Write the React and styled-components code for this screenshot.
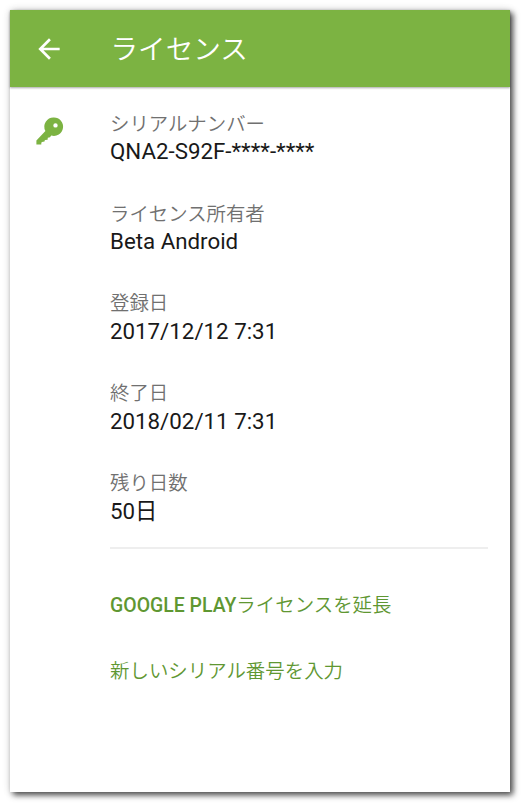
import React from 'react';
import styled, { createGlobalStyle } from 'styled-components';

const GlobalStyle = createGlobalStyle`
  * { box-sizing: border-box; }
  body { margin: 0; background: #fff; }
`;

const Page = styled.div`
  width: 521px;
  height: 803px;
  padding: 10px 11px 11px 10px;
  font-family: Roboto, "Noto Sans CJK JP", sans-serif;
  overflow: hidden;
`;

const Screen = styled.main`
  height: 782px;
  background: #fff;
  box-shadow: 3px 3px 6px rgba(0, 0, 0, 0.7), 0 0 8px rgba(0, 0, 0, 0.14);
`;

const Toolbar = styled.header`
  display: flex;
  align-items: center;
  height: 77px;
  padding-left: 23px;
  gap: 45.5px;
  background: #7cb342;
  box-shadow: 0 1px 2px rgba(0, 0, 0, 0.35);
`;

const BackButton = styled.button`
  display: flex;
  padding: 0;
  border: 0;
  background: none;
  color: #fff;
`;

const Title = styled.h1`
  margin: 2px 0 0;
  font-size: 27.6px;
  line-height: 40px;
  font-weight: 350;
  color: #fff;
`;

const Content = styled.section`
  display: grid;
  grid-template-columns: 100px 378px;
  padding-top: 23.8px;
`;

const IconCell = styled.div`
  padding: 4.2px 0 0 24px;
`;

const Details = styled.dl`
  margin: 0;
  height: 438.2px;
  border-bottom: 2px solid #eeeeee;
`;

const Field = styled.div`
  height: 89.8px;
`;

const Label = styled.dt`
  font-size: 19.4px;
  line-height: 28px;
  font-weight: 350;
  color: #707070;
`;

const Value = styled.dd`
  margin: -0.45px 0 0;
  font-size: 22.3px;
  line-height: 27px;
  color: #191919;
`;

const Actions = styled.nav`
  display: flex;
  flex-direction: column;
  align-items: flex-start;
  grid-column: 2;
  padding-top: 43px;
  gap: 38px;
`;

const Action = styled.button`
  padding: 0;
  border: 0;
  background: none;
  font: 500 19.46px/28px Roboto, "Noto Sans CJK JP", sans-serif;
  color: #5f9732;
  white-space: nowrap;
`;

const Japanese = styled.span`
  font-weight: 350;
`;

const fields = [
  ['シリアルナンバー', 'QNA2-S92F-****-****'],
  ['ライセンス所有者', 'Beta Android'],
  ['登録日', '2017/12/12 7:31'],
  ['終了日', '2018/02/11 7:31'],
  ['残り日数', '50日'],
];

export default function App() {
  return (
    <Page>
      <GlobalStyle />
      <Screen>
        <Toolbar>
          <BackButton aria-label="戻る">
            <svg width="32" height="32" viewBox="0 0 24 24" fill="currentColor">
              <path d="M20 11H7.83l5.59-5.59L12 4l-8 8 8 8 1.41-1.41L7.83 13H20z" />
            </svg>
          </BackButton>
          <Title>ライセンス</Title>
        </Toolbar>
        <Content>
          <IconCell>
            <svg width="32" height="32" viewBox="0 0 32 32" fill="#7cb342" fillRule="evenodd">
              <path d="M20 2.5a9.2 9.2 0 1 1-2.8 18l-1.2 1.8-2.2.4-.2 2-2.7.2-.4 1.6-2.5.4-.7.8v1.7H2.4v-4l9-9.4A9.2 9.2 0 0 1 20 2.5zM21.5 8.2a2.2 2.2 0 1 0 0 4.4 2.2 2.2 0 0 0 0-4.4z" />
            </svg>
          </IconCell>
          <Details>
            {fields.map(([label, value]) => (
              <Field key={label}>
                <Label>{label}</Label>
                <Value>{value}</Value>
              </Field>
            ))}
          </Details>
          <Actions>
            <Action>GOOGLE PLAY<Japanese>ライセンスを延長</Japanese></Action>
            <Action><Japanese>新しいシリアル番号を入力</Japanese></Action>
          </Actions>
        </Content>
      </Screen>
    </Page>
  );
}
